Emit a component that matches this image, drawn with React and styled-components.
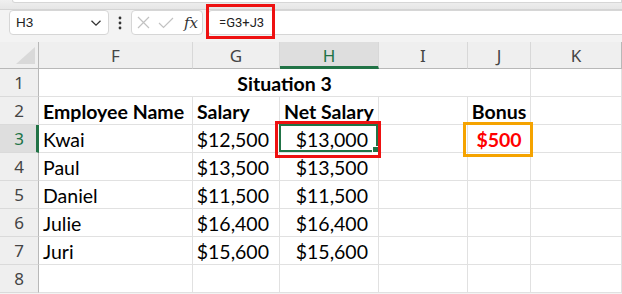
import styled, { createGlobalStyle } from 'styled-components';

const GlobalStyle = createGlobalStyle`
    html, body {
        margin: 0;
        padding: 0;
        width: 622px;
        height: 294px;
        overflow: hidden;
        background: #f3f3f3;
    }
`;

const COLS = [39, 154, 87, 99, 89, 63, 91];
const LETTERS = ['F', 'G', 'H', 'I', 'J', 'K'];

const Window = styled.div`
    width: 622px;
    height: 294px;
    overflow: hidden;
    display: flex;
    flex-direction: column;
    background: #f3f3f3;
`;

const RibbonEdge = styled.div`
    height: 10px;
    flex: none;
    background: linear-gradient(#f0f0f0, #e6e6e6);
    border-bottom: 1px solid #d4d4d4;
    box-sizing: border-box;
    padding-left: 12px;
`;

const RibbonTail = styled.div`
    height: 2px;
    background: #fff;
    border: 1px solid #d6d6d6;
    border-top: none;
    border-radius: 0 0 0 4px;
`;

const FormulaRow = styled.div`
    height: 25px;
    flex: none;
    display: flex;
    align-items: stretch;
    padding-left: 9px;
`;

const NameBox = styled.div`
    width: 100px;
    box-sizing: border-box;
    background: #fff;
    border: 1px solid #d6d6d6;
    border-radius: 4px;
    display: flex;
    align-items: center;
    justify-content: space-between;
    padding: 0 6px 0 6px;
    font-family: 'Liberation Sans', Arial, sans-serif;
    font-size: 13.5px;
    color: #222;
`;

const MoreDots = styled.div`
    width: 22px;
    display: flex;
    align-items: center;
    justify-content: center;
`;

const FxBox = styled.div`
    width: 72px;
    box-sizing: border-box;
    background: #fff;
    border: 1px solid #d6d6d6;
    border-radius: 4px;
    display: flex;
    align-items: center;
    gap: 8px;
    padding-left: 5px;
`;

const Fx = styled.span`
    font-family: 'DejaVu Serif', 'Liberation Serif', serif;
    font-style: italic;
    font-size: 15px;
    color: #333;
    margin-left: 2px;
`;

const FormulaInput = styled.div`
    position: relative;
    flex: 1;
    margin-left: 5px;
    background: #fff;
    border: 1px solid #d6d6d6;
    border-right: none;
    border-radius: 4px 0 0 4px;
    display: flex;
    align-items: center;
    padding-left: 10px;
    font-family: Roboto, 'Liberation Sans', sans-serif;
    font-size: 13px;
    color: #222;
`;

const Callout = styled.div`
    position: absolute;
    z-index: 3;
    box-sizing: border-box;
    border: 3px solid ${(p) => p.color};
    pointer-events: none;
`;

const Sheet = styled.div`
    margin-top: 7px;
    display: grid;
    grid-template-columns: ${COLS.map((c) => `${c}px`).join(' ')};
    grid-template-rows: 27px repeat(8, 28px);
    font-family: Lato, 'Liberation Sans', sans-serif;
`;

const Corner = styled.div`
    position: relative;
    box-sizing: border-box;
    border-right: 1px solid #b8b8b8;
    border-bottom: 1px solid #b8b8b8;
    background: #efefef;
`;

const CornerTriangle = styled.div`
    position: absolute;
    right: 3px;
    bottom: 4px;
    width: 0;
    height: 0;
    border-left: 19px solid transparent;
    border-bottom: 17px solid #d9d9d9;
`;

const ColHeader = styled.div`
    box-sizing: border-box;
    background: ${(p) => (p.active ? '#dedede' : '#efefef')};
    border-right: 1px solid ${(p) => (p.last ? '#b8b8b8' : '#d8d8d8')};
    border-bottom: ${(p) => (p.active ? '3px solid #217346' : '1px solid #b8b8b8')};
    display: flex;
    align-items: center;
    justify-content: center;
    padding-top: ${(p) => (p.active ? '2px' : '0')};
    font-family: 'Noto Sans', 'Open Sans', sans-serif;
    font-size: 17px;
    color: ${(p) => (p.active ? '#217346' : '#444')};
`;

const RowHeader = styled.div`
    box-sizing: border-box;
    background: ${(p) => (p.active ? '#dedede' : '#efefef')};
    border-right: ${(p) => (p.active ? '3px solid #217346' : '1px solid #b8b8b8')};
    border-bottom: 1px solid #dadada;
    display: flex;
    align-items: center;
    justify-content: center;
    font-family: 'Noto Sans', 'Open Sans', sans-serif;
    font-size: 17px;
    color: ${(p) => (p.active ? '#217346' : '#444')};
    padding-left: ${(p) => (p.active ? '2px' : '0')};
`;

const Cell = styled.div`
    position: relative;
    box-sizing: border-box;
    background: #fff;
    grid-column: ${(p) => (p.span ? `span ${p.span}` : 'auto')};
    border-right: 1px solid #e1e1e1;
    border-bottom: 1px solid #e1e1e1;
    display: flex;
    align-items: flex-end;
    justify-content: ${(p) => (p.align === 'right' ? 'flex-end' : p.align === 'center' ? 'center' : 'flex-start')};
    padding: ${(p) => (p.align === 'right' ? '0 10px 1px 0' : p.align === 'center' ? '0 0 1px 0' : '0 0 1px 4px')};
    font-size: 19.5px;
    line-height: 22px;
    font-weight: ${(p) => (p.bold ? 700 : 400)};
    color: ${(p) => p.color || '#000'};
    white-space: nowrap;
`;

const ActiveFrame = styled.div`
    position: absolute;
    inset: -1px 0 0 -1px;
    border: 2px solid #217346;
    z-index: 2;
`;

const FillHandle = styled.div`
    position: absolute;
    right: -3px;
    bottom: -3px;
    width: 5px;
    height: 5px;
    background: #217346;
    border: 1px solid #fff;
    z-index: 3;
`;

const ROWS = [
    { n: 2, cells: [
        { v: 'Employee Name', bold: true },
        { v: 'Salary', bold: true },
        { v: 'Net Salary', bold: true },
        { v: '' },
        { v: 'Bonus', bold: true, align: 'center' },
        { v: '' },
    ] },
    { n: 3, cells: [
        { v: 'Kwai' },
        { v: '$12,500', align: 'right' },
        { v: '$13,000', align: 'right', active: true, callout: 'red' },
        { v: '' },
        { v: '$500', align: 'center', bold: true, color: '#ff0000', callout: 'orange' },
        { v: '' },
    ] },
    { n: 4, cells: [{ v: 'Paul' }, { v: '$13,500', align: 'right' }, { v: '$13,500', align: 'right' }, { v: '' }, { v: '' }, { v: '' }] },
    { n: 5, cells: [{ v: 'Daniel' }, { v: '$11,500', align: 'right' }, { v: '$11,500', align: 'right' }, { v: '' }, { v: '' }, { v: '' }] },
    { n: 6, cells: [{ v: 'Julie' }, { v: '$16,400', align: 'right' }, { v: '$16,400', align: 'right' }, { v: '' }, { v: '' }, { v: '' }] },
    { n: 7, cells: [{ v: 'Juri' }, { v: '$15,600', align: 'right' }, { v: '$15,600', align: 'right' }, { v: '' }, { v: '' }, { v: '' }] },
    { n: 8, cells: [{ v: '' }, { v: '' }, { v: '' }, { v: '' }, { v: '' }, { v: '' }] },
];

const CALLOUTS = {
    red: { color: '#ee1111', style: { top: -4, left: -5, right: -3, bottom: -6 } },
    orange: { color: '#f5a300', style: { top: -3, left: -5, right: -3, bottom: -5 } },
};

function Chevron() {
    return (
        <svg width="12" height="8" viewBox="0 0 12 8">
            <path d="M1.5 1.8 L6 6.2 L10.5 1.8" fill="none" stroke="#333" strokeWidth="1.3" />
        </svg>
    );
}

function Dots() {
    return (
        <svg width="4" height="14" viewBox="0 0 4 14">
            <circle cx="2" cy="2" r="1.4" fill="#333" />
            <circle cx="2" cy="7" r="1.4" fill="#333" />
            <circle cx="2" cy="12" r="1.4" fill="#333" />
        </svg>
    );
}

function CancelIcon() {
    return (
        <svg width="13" height="13" viewBox="0 0 13 13">
            <path d="M1 1 L12 12 M12 1 L1 12" stroke="#c2c2c2" strokeWidth="1.2" />
        </svg>
    );
}

function EnterIcon() {
    return (
        <svg width="16" height="12" viewBox="0 0 16 12">
            <path d="M1 6 L5.5 10.5 L15 1" fill="none" stroke="#c2c2c2" strokeWidth="1.2" />
        </svg>
    );
}

function App() {
    return (
        <Window>
            <GlobalStyle />
            <RibbonEdge>
                <RibbonTail />
            </RibbonEdge>
            <FormulaRow>
                <NameBox>
                    <span>H3</span>
                    <Chevron />
                </NameBox>
                <MoreDots>
                    <Dots />
                </MoreDots>
                <FxBox>
                    <CancelIcon />
                    <EnterIcon />
                    <Fx>fx</Fx>
                </FxBox>
                <FormulaInput>
                    <Callout color="#ee1111" style={{ left: -3, top: -7, width: 69, height: 35 }} />
                    =G3+J3
                </FormulaInput>
            </FormulaRow>
            <Sheet>
                <Corner>
                    <CornerTriangle />
                </Corner>
                {LETTERS.map((l, i) => (
                    <ColHeader key={l} active={l === 'H'} last={i === LETTERS.length - 1}>
                        {l}
                    </ColHeader>
                ))}
                <RowHeader>1</RowHeader>
                <Cell span={5} align="center" bold>
                    Situation 3
                </Cell>
                <Cell />
                {ROWS.map((row) => [
                    <RowHeader key={`h${row.n}`} active={row.n === 3}>
                        {row.n}
                    </RowHeader>,
                    ...row.cells.map((c, i) => (
                        <Cell key={`${row.n}-${i}`} align={c.align} bold={c.bold} color={c.color}>
                            {c.v}
                            {c.active && (
                                <ActiveFrame>
                                    <FillHandle />
                                </ActiveFrame>
                            )}
                            {c.callout && (
                                <Callout color={CALLOUTS[c.callout].color} style={CALLOUTS[c.callout].style} />
                            )}
                        </Cell>
                    )),
                ])}
            </Sheet>
        </Window>
    );
}

export default App;
